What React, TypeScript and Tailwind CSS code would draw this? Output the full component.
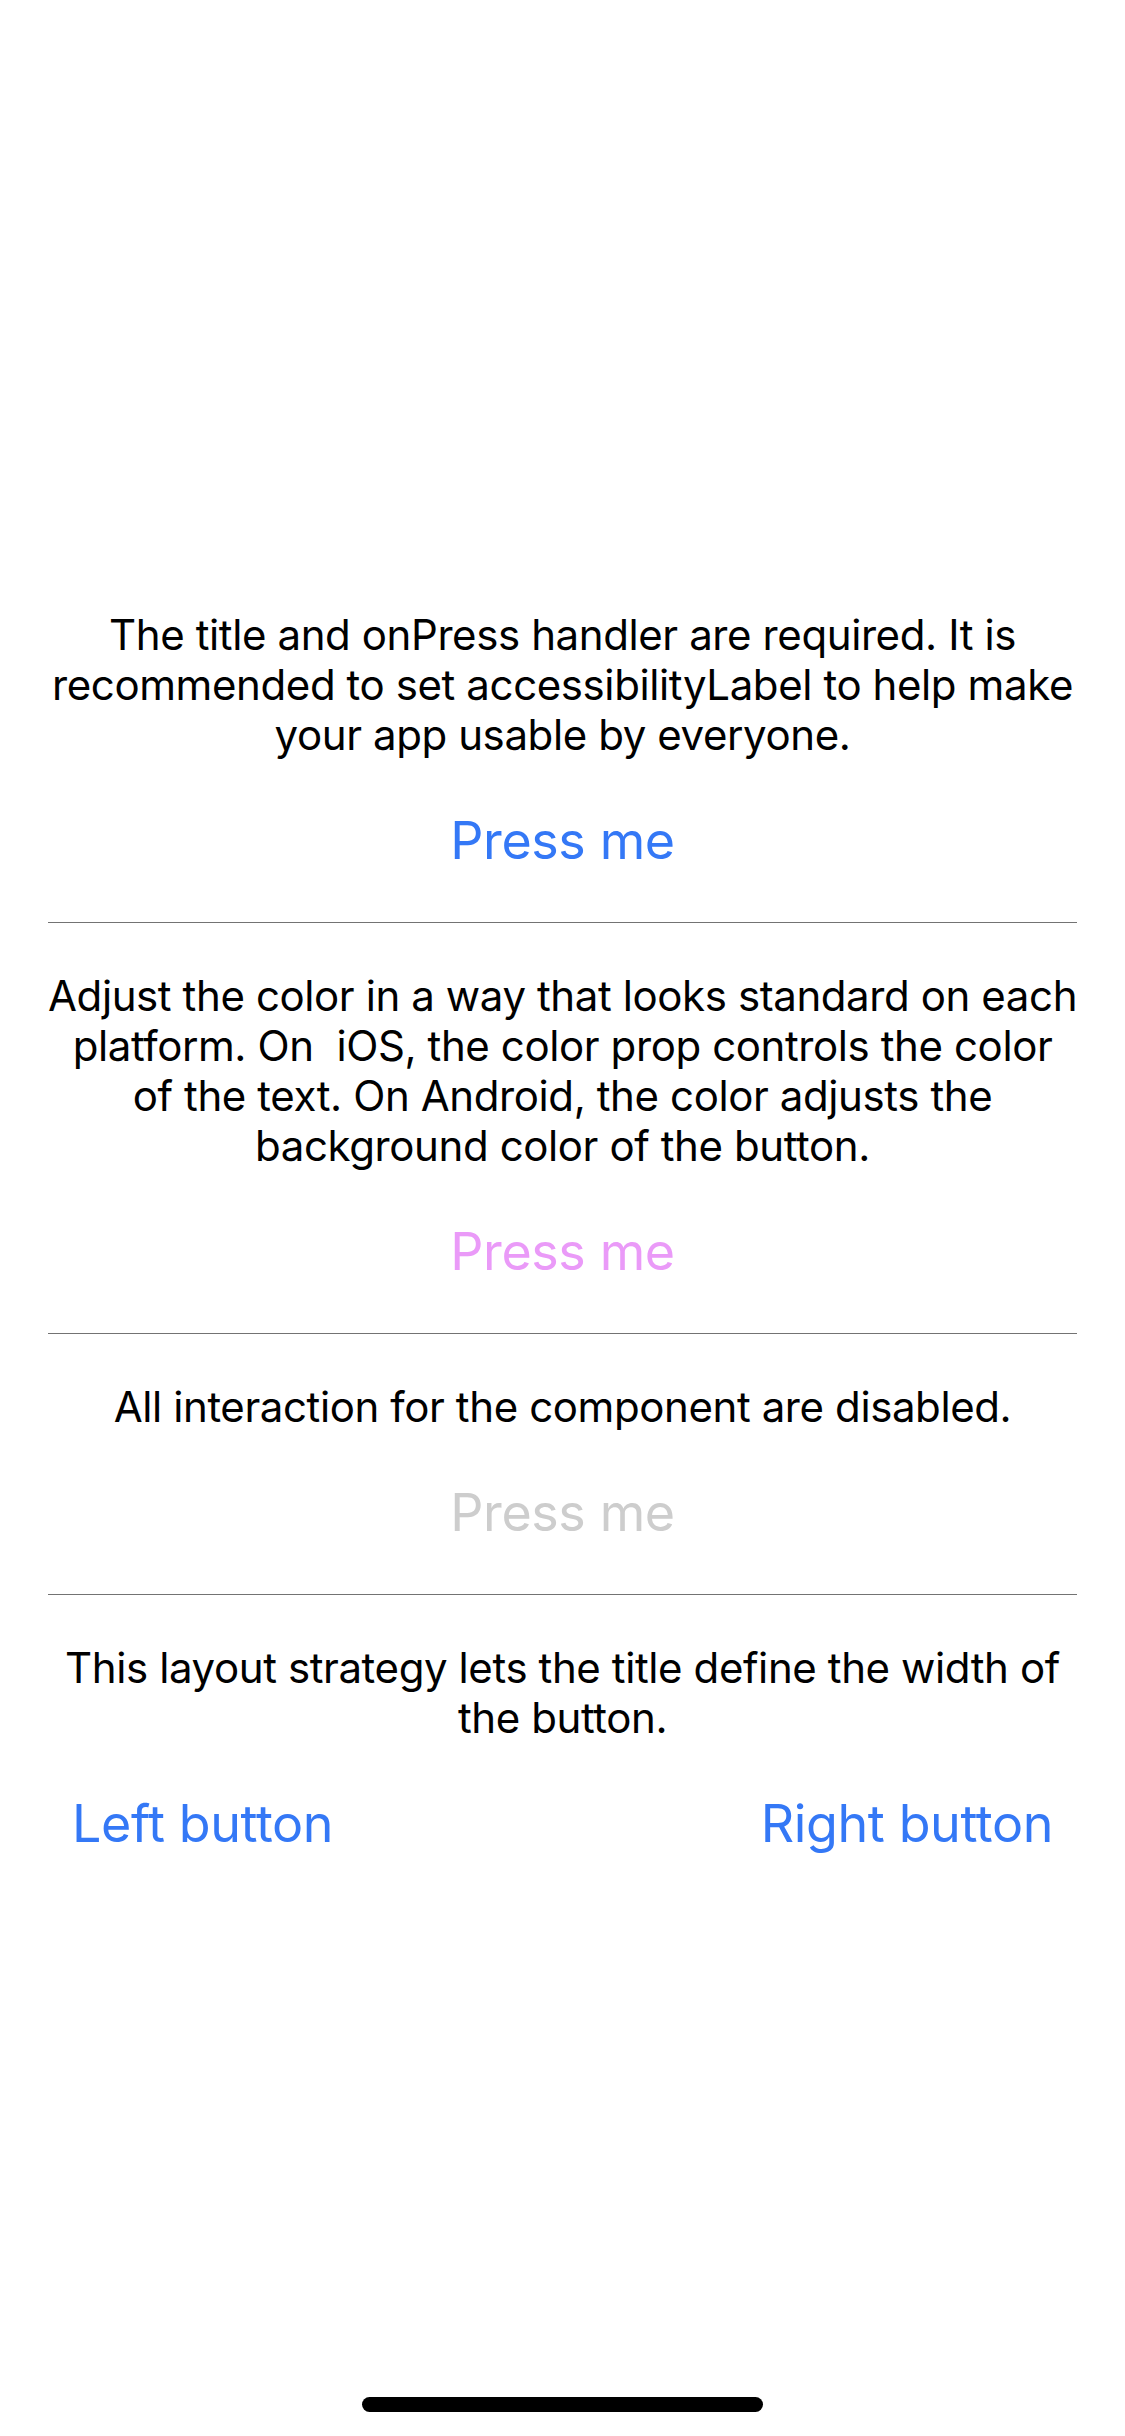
import React from "react";

const font = { fontFamily: "Inter, 'Noto Sans', sans-serif" };

function Title({ lines }: { lines: string[] }) {
  return (
    <div className="my-[24px] text-center text-[42px] leading-[50px] tracking-[-0.4px] text-black">
      {lines.map((l, i) => (
        <div key={i} className="whitespace-pre">
          {l}
        </div>
      ))}
    </div>
  );
}

function Btn({ title, color }: { title: string; color: string }) {
  return (
    <div
      className="p-[24px] text-center text-[52px] leading-[66px] tracking-[-0.4px]"
      style={{ color }}
    >
      {title}
    </div>
  );
}

function Separator() {
  return <div className="my-[24px] h-px bg-[#737373]" />;
}

export default function App() {
  return (
    <div className="relative h-[2436px] w-[1125px] bg-white" style={font}>
      <div className="flex h-full flex-col justify-center px-[48px] pt-[132px] pb-[102px]">
        <div>
          <Title
            lines={[
              "The title and onPress handler are required. It is",
              "recommended to set accessibilityLabel to help make",
              "your app usable by everyone.",
            ]}
          />
          <Btn title="Press me" color="#3478f6" />
        </div>
        <Separator />
        <div>
          <Title
            lines={[
              "Adjust the color in a way that looks standard on each",
              "platform. On  iOS, the color prop controls the color",
              "of the text. On Android, the color adjusts the",
              "background color of the button.",
            ]}
          />
          <Btn title="Press me" color="#ea9af8" />
        </div>
        <Separator />
        <div>
          <Title lines={["All interaction for the component are disabled."]} />
          <Btn title="Press me" color="#cdcdcd" />
        </div>
        <Separator />
        <div>
          <Title
            lines={[
              "This layout strategy lets the title define the width of",
              "the button.",
            ]}
          />
          <div className="flex flex-row justify-between">
            <Btn title="Left button" color="#3478f6" />
            <Btn title="Right button" color="#3478f6" />
          </div>
        </div>
      </div>
      <div className="absolute bottom-[24px] left-[362px] h-[15px] w-[401px] rounded-full bg-black" />
    </div>
  );
}
